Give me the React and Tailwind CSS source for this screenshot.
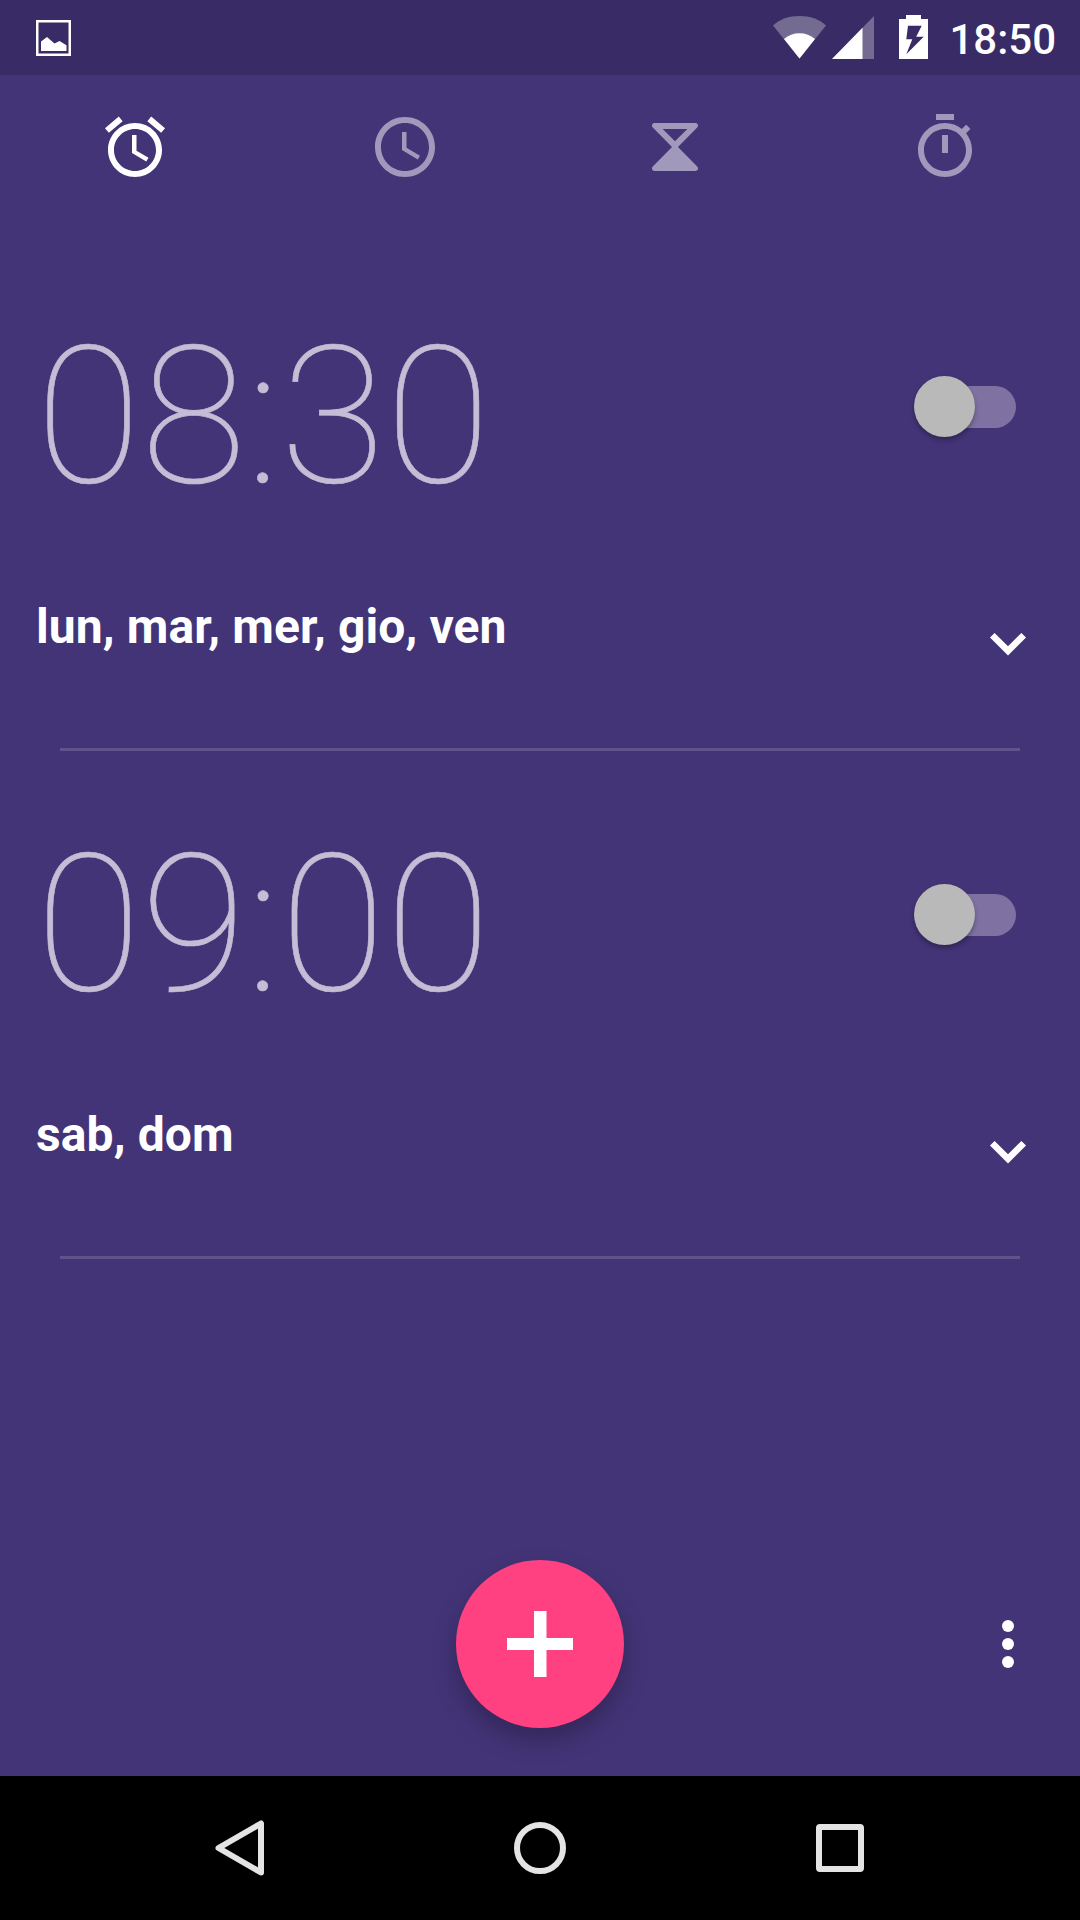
import React, { useState } from "react";

const tabs = [
  {
    id: "alarm",
    path: "M22 5.72l-4.6-3.86-1.29 1.53 4.6 3.86L22 5.72zM7.88 3.39L6.6 1.86 2 5.71l1.29 1.53 4.59-3.85zM12.5 8H11v6l4.75 2.85.75-1.23-4-2.37V8zM12 4c-4.97 0-9 4.03-9 9s4.02 9 9 9c4.97 0 9-4.03 9-9s-4.03-9-9-9zm0 16c-3.87 0-7-3.13-7-7s3.13-7 7-7 7 3.13 7 7-3.13 7-7 7z",
  },
  {
    id: "clock",
    path: "M11.99 2C6.47 2 2 6.48 2 12s4.47 10 9.99 10C17.52 22 22 17.52 22 12S17.52 2 11.99 2zM12 20c-4.42 0-8-3.58-8-8s3.58-8 8-8 8 3.58 8 8-3.58 8-8 8zM12.5 7H11v6l5.25 3.15.75-1.23-4.5-2.67z",
  },
  {
    id: "timer",
    path: "M5.2 4h13.6c.85 0 1.15.95.6 1.5L13 12l6.4 6.5c.55.55.25 1.5-.6 1.5H5.2c-.85 0-1.15-.95-.6-1.5L11 12 4.6 5.5C4.05 4.95 4.35 4 5.2 4zM7.9 6L12 10.1 16.1 6z",
  },
  {
    id: "stopwatch",
    path: "M15 1H9v2h6V1zm-4 13h2V8h-2v6zm8.03-6.61l1.42-1.42c-.43-.51-.9-.99-1.41-1.41l-1.42 1.42C16.07 4.74 14.12 4 12 4c-4.97 0-9 4.03-9 9s4.02 9 9 9 9-4.03 9-9c0-2.12-.74-4.07-1.97-5.61zM12 20c-3.87 0-7-3.13-7-7s3.13-7 7-7 7 3.13 7 7-3.13 7-7 7z",
  },
];

const alarms = [
  { id: 1, time: "08:30", days: "lun, mar, mer, gio, ven" },
  { id: 2, time: "09:00", days: "sab, dom" },
];

const StatusBar = () => (
  <div className="flex h-[75px] items-center justify-between bg-[#392b65] pl-9 pr-6 text-white">
    <svg className="h-9 w-[35px]" viewBox="0 0 35 36" fill="none">
      <rect x="1.25" y="1.25" width="32.5" height="33.5" stroke="currentColor" strokeWidth="2.5" />
      <path d="M5 21.5l6-4.5 7.5 6.5 5-2.5 7 4.2V31H5z" fill="currentColor" />
    </svg>
    <div className="flex items-center">
      <div className="mb-px flex items-center">
        <svg className="h-[44px] w-[53px]" viewBox="0 0 53 44" fill="currentColor">
          <path d="M26.5 43.6L0 10.5C7 4 16 1 26.5 1S46 4 53 10.5z" opacity=".3" />
          <path d="M26.5 43.6L11 24c4.5-4 9.5-5.8 15.5-5.8S37.5 20 42 24z" />
        </svg>
        <svg className="ml-1.5 h-[44px] w-[42px]" viewBox="0 0 42 44" fill="currentColor">
          <path d="M42 1v43H0z" opacity=".3" />
          <path d="M30.5 12.8V44H0z" />
        </svg>
        <svg className="ml-[25px] h-[44px] w-[29px]" viewBox="0 0 29 44">
          <path d="M7 0h15v4h7v40H0V4h7z" fill="currentColor" />
          <path d="M9 10.7h13.7l-5.5 11h7.5L7.3 39.3l6-15h-6z" fill="#392b65" />
        </svg>
      </div>
      <span className="ml-[21px] pt-[4px] text-[42px] font-medium leading-none">18:50</span>
    </div>
  </div>
);

const Alarm = ({ alarm }) => (
  <div className="flex h-[508px] flex-col">
    <div className="flex h-[330px] items-start justify-between pl-9 pr-16">
      <div className="pt-[78px] text-[192px] font-thin leading-none text-[#c4bdd6] [-webkit-text-stroke:0.6px_#c4bdd6]">
        {alarm.time}
      </div>
      <button className="mt-[133px] flex items-center">
        <span className="z-10 h-[61px] w-[61px] rounded-full bg-[#b9b9b9] shadow-[0_3px_5px_rgba(0,0,0,0.3)]"></span>
        <span className="-ml-[42px] h-[42px] w-[83px] rounded-r-full bg-[#7f72a2]"></span>
      </button>
    </div>
    <div className="flex h-[175px] items-start justify-between pl-9 pr-[54px]">
      <div className="pt-[30px] text-[48px] font-bold leading-none tracking-[0.11px] text-white">
        {alarm.days}
      </div>
      <svg className="mt-[60px] h-[23px] w-9" viewBox="0 0 36 23" fill="white">
        <path d="M4.6 0L18 13.3 31.4 0 36 4.6 18 22.6 0 4.6z" />
      </svg>
    </div>
    <div className="mx-[60px] h-[3px] bg-[#60528a]"></div>
  </div>
);

const App = () => {
  const [activeTab, setActiveTab] = useState("alarm");

  return (
    <div className="flex h-[1920px] w-[1080px] flex-col overflow-hidden bg-[#433477] font-['Roboto',sans-serif]">
      <StatusBar />
      <div className="grid h-36 grid-cols-4">
        {tabs.map((tab) => (
          <button
            key={tab.id}
            onClick={() => setActiveTab(tab.id)}
            className="flex items-center justify-center"
          >
            <svg
              className={`h-[72px] w-[72px] ${activeTab === tab.id ? "text-white" : "text-[#a199bb]"}`}
              viewBox="0 0 24 24"
              fill="currentColor"
              fillRule="evenodd"
            >
              <path d={tab.path} />
            </svg>
          </button>
        ))}
      </div>

      <div className="flex-1 pt-6">
        {alarms.map((alarm) => (
          <Alarm key={alarm.id} alarm={alarm} />
        ))}
      </div>

      <div className="grid grid-cols-3 items-center pb-12">
        <div></div>
        <button className="flex h-[168px] w-[168px] items-center justify-center justify-self-center rounded-full bg-[#ff4081] shadow-[0_12px_24px_rgba(0,0,0,0.25)]">
          <svg className="h-[66px] w-[66px]" viewBox="0 0 66 66" fill="white">
            <path d="M27 0h12.5v27H66v12H39.5v27H27V39H0V27h27z" />
          </svg>
        </button>
        <button className="mr-[66px] flex flex-col gap-1.5 justify-self-end">
          <span className="h-3 w-3 rounded-full bg-white"></span>
          <span className="h-3 w-3 rounded-full bg-white"></span>
          <span className="h-3 w-3 rounded-full bg-white"></span>
        </button>
      </div>

      {/* system navigation */}
      <div className="flex h-36 items-center justify-between bg-black pl-[215px] pr-[216px]">
        <svg className="h-[56px] w-[49px]" viewBox="0 0 49 56" fill="none">
          <path d="M46 3.5v49L3.5 28z" stroke="#e4e4e4" strokeWidth="6" strokeLinejoin="round" />
        </svg>
        <div className="h-[52px] w-[52px] rounded-full border-[6px] border-[#e4e4e4]"></div>
        <div className="h-12 w-12 rounded-[4px] border-[6px] border-[#e4e4e4]"></div>
      </div>
    </div>
  );
};

export default App;
